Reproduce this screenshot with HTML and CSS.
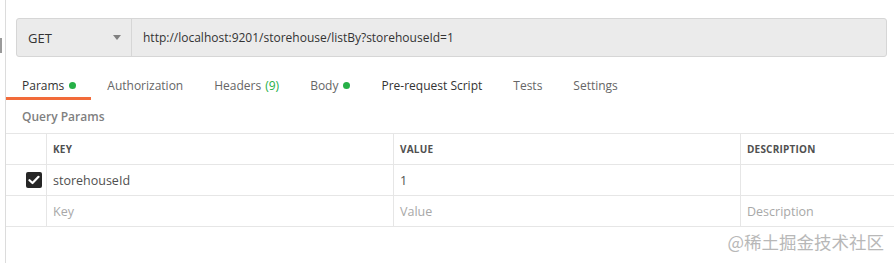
FILE: index.html
```html
<!DOCTYPE html>
<html lang="en">
<head>
<meta charset="UTF-8" />
<title>Request - Params</title>
<link rel="stylesheet" href="styles.css">
</head>
<body>

<div class="scroll-thumb"></div>

<div class="pane">

  <div class="request-bar">
    <div class="method">
      <span>GET</span>
      <span class="caret"></span>
    </div>
    <div class="url">http://localhost:9201/storehouse/listBy?storehouseId=1</div>
  </div>

  <div class="tabs">
    <div class="tab active">Params <span class="dot"></span></div>
    <div class="tab">Authorization</div>
    <div class="tab">Headers <span class="count">(9)</span></div>
    <div class="tab">Body <span class="dot"></span></div>
    <div class="tab dark">Pre-request Script</div>
    <div class="tab">Tests</div>
    <div class="tab">Settings</div>
  </div>

  <div class="section-title">Query Params</div>

  <table class="params">
    <thead>
      <tr>
        <th class="check-col"></th>
        <th class="key-col">KEY</th>
        <th class="value-col">VALUE</th>
        <th>DESCRIPTION</th>
      </tr>
    </thead>
    <tbody>
      <tr>
        <td class="check-col">
          <span class="checkbox">
            <svg width="12" height="10" viewBox="0 0 12 10"><path d="M1.5 5.2 L4.5 8 L10.5 1.8" fill="none" stroke="#fff" stroke-width="2.2" stroke-linecap="round" stroke-linejoin="round"/></svg>
          </span>
        </td>
        <td>storehouseId</td>
        <td>1</td>
        <td></td>
      </tr>
      <tr class="placeholder">
        <td class="check-col"></td>
        <td>Key</td>
        <td>Value</td>
        <td>Description</td>
      </tr>
    </tbody>
  </table>

  <div class="watermark">@稀土掘金技术社区</div>
</div>

</body>
</html>
```

FILE: styles.css
```css
body {
  margin: 0;
  background: #fff;
  font-family: "Open Sans", "Noto Sans", sans-serif;
  font-size: 12px;
  color: #505050;
  overflow: hidden;
}
.scroll-thumb {
  position: absolute;
  left: 0;
  top: 38px;
  width: 2px;
  height: 15px;
  background: #9a9a9a;
}
.pane {
  margin-left: 5px;
  padding-top: 18px;
  border-left: 1px solid #dcdcdc;
  height: 100vh;
  box-sizing: border-box;
}
.request-bar {
  display: flex;
  height: 39px;
  margin: 0 7px 0 10px;
  background: #ebebeb;
  border: 1px solid #d6d6d6;
  border-radius: 3px;
  box-sizing: border-box;
}
.method {
  display: flex;
  align-items: center;
  justify-content: space-between;
  width: 115px;
  padding: 0 10px 0 11px;
  box-sizing: border-box;
  border-right: 1px solid #d6d6d6;
  font-size: 13px;
  color: #333;
}
.caret {
  width: 0;
  height: 0;
  border-left: 4px solid transparent;
  border-right: 4px solid transparent;
  border-top: 5px solid #808080;
}
.url {
  display: flex;
  align-items: center;
  padding-left: 11px;
  color: #333;
}
.tabs {
  display: flex;
  margin-top: 16px;
  height: 27px;
}
.tab {
  display: flex;
  align-items: center;
  padding: 0 15px 0 16px;
  height: 24px;
  color: #666;
}
.tab.active {
  color: #333;
  border-bottom: 3px solid #f26b3a;
}
.tab.dark {
  color: #333;
}
.dot {
  display: inline-block;
  width: 7px;
  height: 7px;
  border-radius: 50%;
  background: #26b047;
  margin-left: 5px;
}
.count {
  color: #26b047;
  margin-left: 4px;
}
.section-title {
  margin: 7px 0 0 16px;
  height: 20px;
  line-height: 20px;
  color: #808080;
  font-weight: 600;
}
.params {
  width: 100%;
  border-collapse: collapse;
  margin-top: 6px;
  table-layout: fixed;
}
.params th,
.params td {
  height: 30px;
  padding: 0 6px;
  border-top: 1px solid #e6e6e6;
  border-bottom: 1px solid #e6e6e6;
  border-left: 1px solid #e6e6e6;
  text-align: left;
}
.params th:first-child,
.params td:first-child {
  border-left: none;
}
.params th {
  font-size: 10px;
  font-weight: 700;
  color: #505050;
  letter-spacing: 0.2px;
}
.params td {
  font-size: 12.5px;
}
.check-col {
  width: 28px;
}
.key-col,
.value-col {
  width: 334px;
}
.checkbox {
  display: flex;
  align-items: center;
  justify-content: center;
  width: 16px;
  height: 16px;
  margin-left: 14px;
  border-radius: 2px;
  background: #262626;
}
.placeholder td {
  color: #a8a8a8;
}
.watermark {
  margin: 2px 10px 0 0;
  text-align: right;
  font-family: "Noto Sans CJK SC", sans-serif;
  font-size: 17.5px;
  color: #b8b8b8;
}
```
